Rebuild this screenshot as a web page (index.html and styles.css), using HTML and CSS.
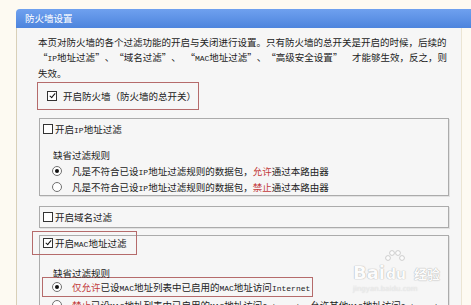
FILE: index.html
```html
<!DOCTYPE html>
<html lang="zh-CN">
<head>
    <meta charset="UTF-8">
    <title>防火墙设置</title>
    <link rel="stylesheet" href="styles.css">
</head>
<body>
    <div class="panel">
        <div class="panel-head">防火墙设置</div>
        <div class="panel-body">
            <p class="intro">本页对防火墙的各个过滤功能的开启与关闭进行设置。只有防火墙的总开关是开启的时候，后续的<br><span class="qo">“</span><span class="en">IP</span>地址过滤<span class="qc">”</span>、<span class="qo">“</span>域名过滤<span class="qc">”</span>、　<span class="qo">“</span><span class="en">MAC</span>地址过滤<span class="qc">”</span>、<span class="qo">“</span>高级安全设置<span class="qc">”</span>　才能够生效，反之，则<br>失效。</p>

            <div class="master">
                <span class="check on"></span>
                <span>开启防火墙（防火墙的总开关）</span>
            </div>

            <!-- IP filter -->
            <div class="group">
                <div class="group-title">
                    <span class="check"></span>
                    <span>开启<span class="en">IP</span>地址过滤</span>
                </div>
                <div class="rules">
                    <div class="rules-title">缺省过滤规则</div>
                    <div class="rule">
                        <span class="radio on"></span>
                        <span>凡是不符合已设<span class="en">IP</span>地址过滤规则的数据包，<em class="hl">允许</em>通过本路由器</span>
                    </div>
                    <div class="rule">
                        <span class="radio"></span>
                        <span>凡是不符合已设<span class="en">IP</span>地址过滤规则的数据包，<em class="hl">禁止</em>通过本路由器</span>
                    </div>
                </div>
            </div>

            <!-- domain filter -->
            <div class="group group-domain">
                <div class="group-title">
                    <span class="check"></span>
                    <span>开启域名过滤</span>
                </div>
            </div>

            <!-- MAC filter -->
            <div class="group group-mac">
                <div class="group-title marked">
                    <span class="check on"></span>
                    <span>开启<span class="en">MAC</span>地址过滤</span>
                </div>
                <div class="rules">
                    <div class="rules-title">缺省过滤规则</div>
                    <div class="rule marked">
                        <span class="radio on"></span>
                        <span><em class="hl">仅允许</em>已设<span class="en">MAC</span>地址列表中已启用的<span class="en">MAC</span>地址访问<span class="en">Internet</span></span>
                    </div>
                    <div class="rule">
                        <span class="radio"></span>
                        <span><em class="hl">禁止</em>已设<span class="en">MAC</span>地址列表中已启用的<span class="en">MAC</span>地址访问<span class="en">Internet</span>，允许其他<span class="en">MAC</span>地址访问<span class="en">Internet</span></span>
                    </div>
                </div>
            </div>
        </div>

        <div class="watermark">
            <svg class="paw" width="22" height="14" viewBox="0 0 22 14">
                <circle cx="4" cy="9" r="2.4"/>
                <circle cx="8" cy="4" r="2.4"/>
                <circle cx="14" cy="4" r="2.4"/>
                <circle cx="18" cy="9" r="2.4"/>
            </svg>
            <div class="wm-main"><span>Bai</span><span class="wm-du">du</span><span class="wm-cn">经验</span></div>
            <div class="wm-url">jingyan.baidu.com</div>
        </div>
    </div>
</body>
</html>
```

FILE: styles.css
```css
body {
    margin: 0;
    background-color: #fdfaf2;
    font-family: "Noto Sans CJK SC", sans-serif;
    font-size: 9.5px;
    color: #222;
    overflow: hidden;
}
.panel {
    position: relative;
    margin: 9px 0 0 16px;
}
.panel-head {
    height: 19px;
    line-height: 19px;
    padding-left: 9px;
    color: #fff;
    background: linear-gradient(#6fa1ef, #4d84dd);
    border-top-left-radius: 4px;
}
.panel-body {
    height: 300px;
    margin-right: 9px;
    padding: 7px 12px 0 21px;
    background-color: #f6f6f6;
    border-left: 1px solid #d9d0b8;
    border-right: 1px solid #ece5d3;
}
.intro {
    margin: 0;
    line-height: 14.5px;
}
/* full-width quote marks, as the old SimSun pages show them */
.qo, .qc {
    display: inline-block;
    width: 9.5px;
}
.qo {
    text-align: right;
}
.qc {
    text-align: left;
}
.en {
    font-family: "Liberation Mono", monospace;
    font-size: 8px;
}
.hl {
    font-style: normal;
    color: #c23a3a;
}
.master {
    display: flex;
    align-items: center;
    box-sizing: border-box;
    width: 162px;
    height: 28px;
    margin: 1px 0 0 -1px;
    padding-left: 9px;
    border: 1px solid #b56b6b;
}
.master .check {
    margin-right: 6px;
}
.group {
    margin: 8px 0 0 1px;
    border: 1px solid #ababab;
    box-shadow: 1px 1px 0 #e2e2e2;
}
.group-domain {
    margin-top: 10px;
}
.group-mac {
    margin-top: 7px;
    height: 90px;
    border-bottom: none;
}
.group-title {
    display: flex;
    align-items: center;
    height: 20px;
    padding-left: 3px;
}
.group-title .check {
    margin-right: 2px;
}
.group-title.marked {
    box-sizing: border-box;
    width: 105px;
    height: 24px;
    margin: -5px 0 0 -8px;
    padding-left: 10px;
    border: 1px solid #b56b6b;
}
.rules {
    padding: 8px 0 0 12px;
}
.group-mac .rules {
    padding-top: 10px;
}
.rules-title {
    line-height: 16px;
    padding-left: 1px;
}
.rule {
    display: flex;
    align-items: center;
    height: 16px;
    white-space: nowrap;
}
.rule .radio {
    margin-right: 10px;
}
.rule.marked {
    box-sizing: border-box;
    width: 271px;
    height: 20px;
    margin: -4px 0 0 -10px;
    padding-left: 9px;
    border: 1px solid #b56b6b;
}
.check {
    flex-shrink: 0;
    box-sizing: border-box;
    width: 10px;
    height: 10px;
    border: 1px solid #333;
    background-color: #fff;
}
.check.on::after {
    content: '';
    display: block;
    width: 2px;
    height: 5px;
    margin: 0 0 0 2.5px;
    border: solid #111;
    border-width: 0 1.5px 1.5px 0;
    transform: rotate(40deg);
}
.radio {
    flex-shrink: 0;
    display: flex;
    align-items: center;
    justify-content: center;
    box-sizing: border-box;
    width: 10px;
    height: 10px;
    border: 1px solid #707070;
    border-radius: 50%;
    background-color: #fff;
}
.radio.on::after {
    content: '';
    width: 4px;
    height: 4px;
    border-radius: 50%;
    background-color: #111;
}
.watermark {
    position: absolute;
    left: 337px;
    top: 240px;
    width: 95px;
    color: #fff;
    text-shadow: 0 0 1px #9a9a9a, 0 0 1px #9a9a9a;
    opacity: 0.75;
}
.paw {
    display: block;
    margin-left: 31px;
    fill: #fff;
    stroke: #a8a8a8;
    stroke-width: 0.7;
}
.wm-main {
    display: flex;
    align-items: baseline;
    font-family: "DejaVu Sans", sans-serif;
    font-size: 18px;
    font-weight: bold;
    line-height: 20px;
}
.wm-du {
    font-size: 14px;
    margin-left: 1px;
}
.wm-cn {
    font-family: "Noto Sans CJK SC", sans-serif;
    font-size: 13px;
    margin-left: 8px;
}
.wm-url {
    font-family: "DejaVu Sans", sans-serif;
    font-size: 7px;
    line-height: 10px;
    color: #eee;
    text-shadow: 0 0 1px #bbb;
}
```
